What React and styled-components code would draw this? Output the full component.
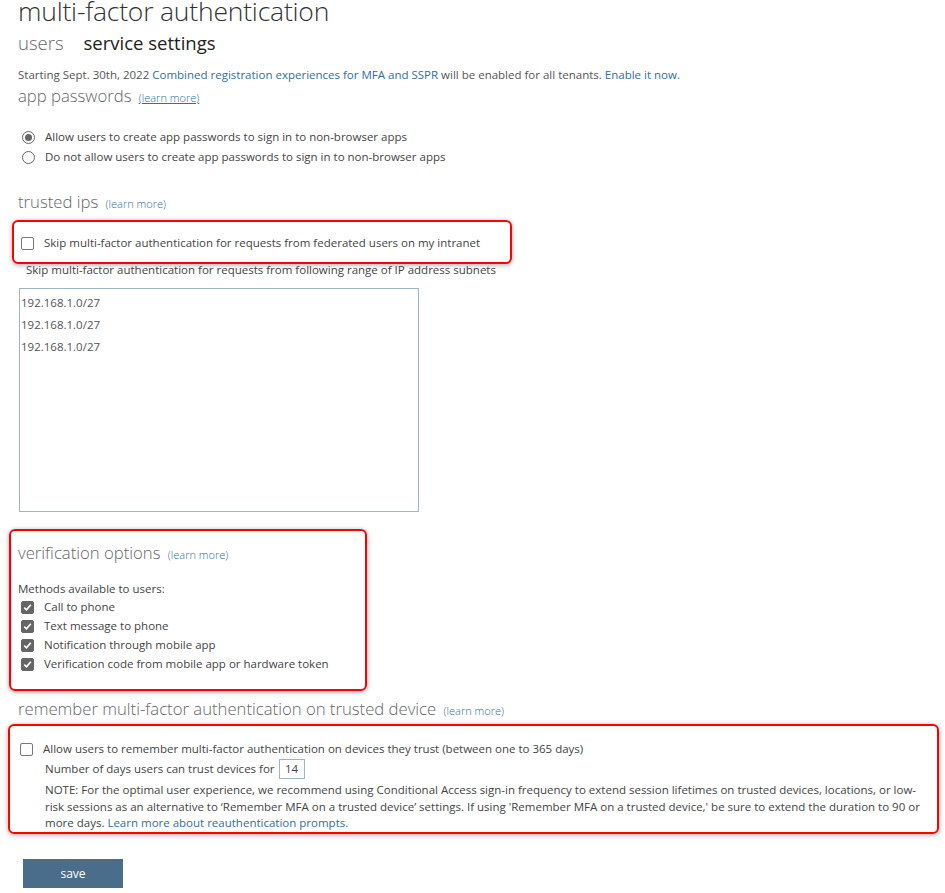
import styled, { createGlobalStyle } from 'styled-components';

const GlobalStyle = createGlobalStyle`
    body {
        margin: 0;
        background: #fff;
        font-family: "Open Sans", "Noto Sans", sans-serif;
        color: #444;
    }
`

const Page = styled.div`
    padding: 0 0 5px 18px;
    width: 927px;
    box-sizing: border-box;
`

const Title = styled.h1`
    margin: -7px 0 0 0;
    font-size: 26.5px;
    font-weight: 300;
    color: #333;
    line-height: 36px;
    letter-spacing: -0.2px;
`

const Tabs = styled.div`
    display: flex;
    gap: 20px;
    margin-top: 1px;
`

const Tab = styled.span`
    font-size: 18.5px;
    font-weight: ${p => (p.active ? 400 : 300)};
    color: ${p => (p.active ? '#222' : '#666')};
    line-height: 26px;
`

const Notice = styled.p`
    margin: 11px 0 0 0;
    font-size: 11.5px;
    line-height: 16px;
    color: #555;
`

const Link = styled.a`
    color: #2f6ea8;
    text-decoration: none;
`

const SectionTitle = styled.h2`
    margin: ${p => p.top || '0'} 0 0 0;
    font-size: 16.7px;
    font-weight: 300;
    color: #666;
    line-height: 24px;
`

const LearnMore = styled.a`
    font-size: 11px;
    color: #2f6ea8;
    text-decoration: ${p => (p.underline ? 'underline' : 'none')};
    margin-left: 3px;
`

const OptionList = styled.div`
    display: flex;
    flex-direction: column;
    gap: ${p => p.gap || '4px'};
    margin: ${p => p.top || '0'} 0 0 ${p => p.left || '2px'};
`

const Option = styled.label`
    display: flex;
    align-items: center;
    gap: 10px;
    font-size: 11.5px;
    line-height: 16px;
    color: #444;
`

const RadioMark = styled.span`
    width: 11px;
    height: 11px;
    border-radius: 50%;
    border: 1px solid #666;
    background: #fff;
    display: flex;
    align-items: center;
    justify-content: center;
    flex-shrink: 0;

    &::after {
        content: '';
        width: 7px;
        height: 7px;
        border-radius: 50%;
        background: ${p => (p.checked ? '#666' : 'transparent')};
    }
`

const BoxMark = styled.span`
    width: 11px;
    height: 11px;
    border-radius: 2px;
    border: 1px solid ${p => (p.checked ? '#666' : '#777')};
    background: ${p => (p.checked ? '#666' : '#fff')};
    display: flex;
    align-items: center;
    justify-content: center;
    flex-shrink: 0;
`

const Highlight = styled.div`
    border: 2px solid #f00;
    border-radius: 6px;
    box-shadow: 0 1px 5px rgba(0, 0, 0, 0.35);
    margin-left: ${p => p.left || '-6px'};
    width: ${p => p.width};
    padding: ${p => p.pad || '0'};
    box-sizing: border-box;
    margin-top: ${p => p.top || '0'};
`

const SubText = styled.p`
    margin: ${p => p.top || '0'} 0 0 ${p => p.left || '0'};
    font-size: 11.5px;
    line-height: 16px;
    color: #444;
`

const IpBox = styled.div`
    width: 400px;
    height: 224px;
    border: 1px solid #9fb4c7;
    box-sizing: border-box;
    margin: 10px 0 0 1px;
    padding: 6px 0 0 1px;
    display: flex;
    flex-direction: column;
    gap: 6px;
    font-size: 11.5px;
    line-height: 16px;
    color: #555;
`

const DaysRow = styled.div`
    display: flex;
    align-items: center;
    gap: 4px;
    margin: 2px 0 0 25px;
    font-size: 11.5px;
    line-height: 20px;
    color: #444;
`

const DaysInput = styled.span`
    display: inline-block;
    width: 24px;
    height: 18px;
    border: 1px solid #9fb4c7;
    text-align: center;
    line-height: 18px;
`

const Note = styled.p`
    margin: 3px 0 0 25px;
    font-size: 11.5px;
    line-height: 16.5px;
    color: #444;
`

const SaveButton = styled.button`
    margin: 25px 0 0 5px;
    width: 100px;
    height: 29px;
    border: none;
    background: #4a6d8c;
    color: #fff;
    font-family: inherit;
    font-size: 12px;
    display: block;
`

const Check = () => (
    <svg width="9" height="9" viewBox="0 0 9 9">
        <path d="M1.3 4.6 L3.5 6.8 L7.8 1.8" fill="none" stroke="#fff" strokeWidth="1.7" />
    </svg>
)

const Box = ({ checked }) => (
    <BoxMark checked={checked}>{checked && <Check />}</BoxMark>
)

const methods = [
    'Call to phone',
    'Text message to phone',
    'Notification through mobile app',
    'Verification code from mobile app or hardware token',
]

const ips = ['192.168.1.0/27', '192.168.1.0/27', '192.168.1.0/27']

const App = () => {
    return (
        <Page>
            <GlobalStyle />
            <Title>multi-factor authentication</Title>
            <Tabs>
                <Tab>users</Tab>
                <Tab active>service settings</Tab>
            </Tabs>
            <Notice>
                Starting Sept. 30th, 2022 <Link href="#">Combined registration experiences for MFA and SSPR</Link> will be
                enabled for all tenants. <Link href="#">Enable it now.</Link>
            </Notice>
            <SectionTitle top="1px">
                app passwords <LearnMore underline href="#">(learn more)</LearnMore>
            </SectionTitle>
            <OptionList top="19px" left="4px">
                <Option><RadioMark checked />Allow users to create app passwords to sign in to non-browser apps</Option>
                <Option><RadioMark />Do not allow users to create app passwords to sign in to non-browser apps</Option>
            </OptionList>

            <SectionTitle top="25px">
                trusted ips <LearnMore href="#">(learn more)</LearnMore>
            </SectionTitle>
            <Highlight width="500px" pad="13px 0 11px 7px" top="4px">
                <Option><Box />Skip multi-factor authentication for requests from federated users on my intranet</Option>
            </Highlight>
            <SubText left="8px" top="-2px">Skip multi-factor authentication for requests from following range of IP address subnets</SubText>
            <IpBox>
                {ips.map((ip, i) => <div key={i}>{ip}</div>)}
            </IpBox>

            <Highlight width="358px" left="-9px" top="17px" pad="10px 0 17px 7px">
                <SectionTitle>
                    verification options <LearnMore href="#">(learn more)</LearnMore>
                </SectionTitle>
                <SubText top="14px">Methods available to users:</SubText>
                <OptionList gap="3px" left="3px" top="2px">
                    {methods.map(m => (
                        <Option key={m}><Box checked />{m}</Option>
                    ))}
                </OptionList>
            </Highlight>

            <SectionTitle top="6px">
                remember multi-factor authentication on trusted device <LearnMore href="#">(learn more)</LearnMore>
            </SectionTitle>
            <Highlight width="931px" left="-10px" top="1px" pad="15px 12px 0 10px">
                <Option>
                    <Box />Allow users to remember multi-factor authentication on devices they trust (between one to 365 days)
                </Option>
                <DaysRow>
                    Number of days users can trust devices for <DaysInput>14</DaysInput>
                </DaysRow>
                <Note>
                    NOTE: For the optimal user experience, we recommend using Conditional Access sign-in frequency to extend
                    session lifetimes on trusted devices, locations, or low-risk sessions as an alternative to ‘Remember MFA on
                    a trusted device’ settings. If using 'Remember MFA on a trusted device,' be sure to extend the duration to
                    90 or more days. <Link href="#">Learn more about reauthentication prompts.</Link>
                </Note>
            </Highlight>

            <SaveButton>save</SaveButton>
        </Page>
    );
};

export default App;
